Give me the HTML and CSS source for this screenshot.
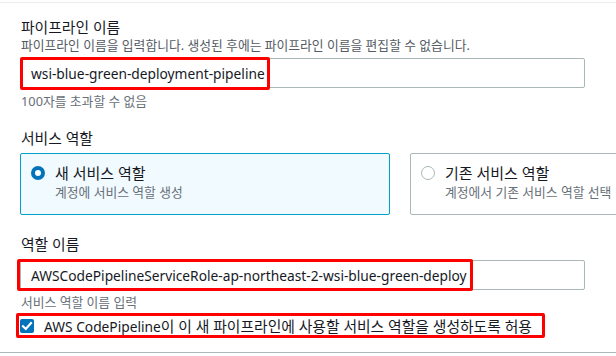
FILE: index.html
```html
<!DOCTYPE html>
<html lang="ko">
<head>
<meta charset="utf-8">
<link rel="stylesheet" href="styles.css">
</head>
<body>
<div class="page">
  <div class="form">
    <div class="field">
      <div class="label">파이프라인 이름</div>
      <div class="desc">파이프라인 이름을 입력합니다. 생성된 후에는 파이프라인 이름을 편집할 수 없습니다.</div>
      <div class="input input-1">
        <span class="value">wsi-blue-green-deployment-pipeline</span>
        <span class="mark mark-1"></span>
      </div>
      <div class="hint">100자를 초과할 수 없음</div>
    </div>

    <div class="field field-gap">
      <div class="label">서비스 역할</div>
      <div class="tiles">
        <div class="tile selected">
          <span class="radio on"></span>
          <div class="tile-text">
            <div class="tile-title">새 서비스 역할</div>
            <div class="tile-sub">계정에 서비스 역할 생성</div>
          </div>
        </div>
        <div class="tile">
          <span class="radio"></span>
          <div class="tile-text">
            <div class="tile-title">기존 서비스 역할</div>
            <div class="tile-sub">계정에서 기존 서비스 역할 선택</div>
          </div>
        </div>
      </div>
    </div>

    <div class="field field-gap">
      <div class="label">역할 이름</div>
      <div class="input input-2">
        <span class="value">AWSCodePipelineServiceRole-ap-northeast-2-wsi-blue-green-deploy</span>
        <span class="mark mark-2"></span>
      </div>
      <div class="hint hint-2">서비스 역할 이름 입력</div>
      <div class="check-row">
        <span class="checkbox">
          <svg width="14" height="14" viewBox="0 0 14 14"><path d="M3 7.2 L5.8 10 L11 4" fill="none" stroke="#fff" stroke-width="2.2" stroke-linecap="square"/></svg>
        </span>
        <span class="check-label"><span class="latin">AWS CodePipeline</span>이 이 새 파이프라인에 사용할 서비스 역할을 생성하도록 허용</span>
        <span class="mark mark-3"></span>
      </div>
    </div>
  </div>
</div>
</body>
</html>
```

FILE: styles.css
```css
html, body {
  margin: 0;
  padding: 0;
  background: #fff;
}
body {
  width: 616px;
  height: 356px;
  overflow: hidden;
  font-family: "Noto Sans", "Noto Sans CJK KR", sans-serif;
  color: #16191f;
}
.page {
  margin-top: 2px;
  border-top: 1px solid #eaeded;
  border-bottom: 1px solid #aab7b8;
  height: 351px;
  box-sizing: border-box;
  overflow: hidden;
}
.form {
  padding: 14px 0 0 20px;
  display: flex;
  flex-direction: column;
}
.field {
  display: flex;
  flex-direction: column;
}
.field-gap {
  margin-top: 19px;
}
.label {
  font-size: 14.8px;
  line-height: 20px;
  padding-left: 1px;
}
.desc {
  font-size: 12.8px;
  line-height: 16px;
  color: #545b64;
  margin-top: 0;
  padding-left: 1px;
  white-space: nowrap;
}
.input {
  position: relative;
  width: 565px;
  height: 30px;
  box-sizing: border-box;
  border: 1px solid #aab7b8;
  border-radius: 2px;
  padding-left: 10px;
  display: flex;
  align-items: center;
  font-size: 13.75px;
  white-space: nowrap;
}
.input-1 { margin-top: 5px; }
.input-2 { margin-top: 6px; }
.hint {
  font-size: 12.8px;
  line-height: 16px;
  color: #687078;
  margin-top: 5px;
  padding-left: 1px;
}
.hint-2 { margin-top: 4px; }
.mark {
  position: absolute;
  border: 3px solid #f00;
  box-sizing: border-box;
  border-radius: 2px;
  pointer-events: none;
}
.mark-1 {
  left: -1px;
  top: -2px;
  width: 250px;
  height: 33px;
}
.mark-2 {
  left: -4px;
  top: -2px;
  width: 456px;
  height: 32px;
}
.mark-3 {
  left: -4px;
  top: 0;
  width: 529px;
  height: 25px;
}
.tiles {
  margin-top: 5px;
  display: grid;
  grid-template-columns: 370px 370px;
  column-gap: 20px;
}
.tile {
  height: 62px;
  box-sizing: border-box;
  border: 1px solid #aab7b8;
  border-radius: 2px;
  padding: 9px 10px;
  display: flex;
  align-items: flex-start;
  gap: 10px;
}
.tile.selected {
  border-color: #00a1c9;
  background: #f1faff;
}
.radio {
  width: 14px;
  height: 14px;
  box-sizing: border-box;
  border-radius: 50%;
  border: 1.5px solid #aab7b8;
  margin-top: 3px;
  flex: none;
  background: #fff;
}
.radio.on {
  border: 4px solid #0073bb;
}
.tile-title {
  font-size: 15px;
  line-height: 20px;
  white-space: nowrap;
}
.tile-sub {
  font-size: 12.8px;
  line-height: 16px;
  color: #687078;
  margin-top: 1px;
  white-space: nowrap;
}
.check-row {
  position: relative;
  margin-top: 3px;
  height: 25px;
  display: flex;
  align-items: center;
  gap: 10px;
}
.checkbox {
  width: 14px;
  height: 14px;
  background: #0073bb;
  border-radius: 2px;
  display: flex;
  flex: none;
}
.check-label {
  font-size: 14.8px;
  white-space: nowrap;
}
.check-label .latin {
  font-size: 13.75px;
}
```
